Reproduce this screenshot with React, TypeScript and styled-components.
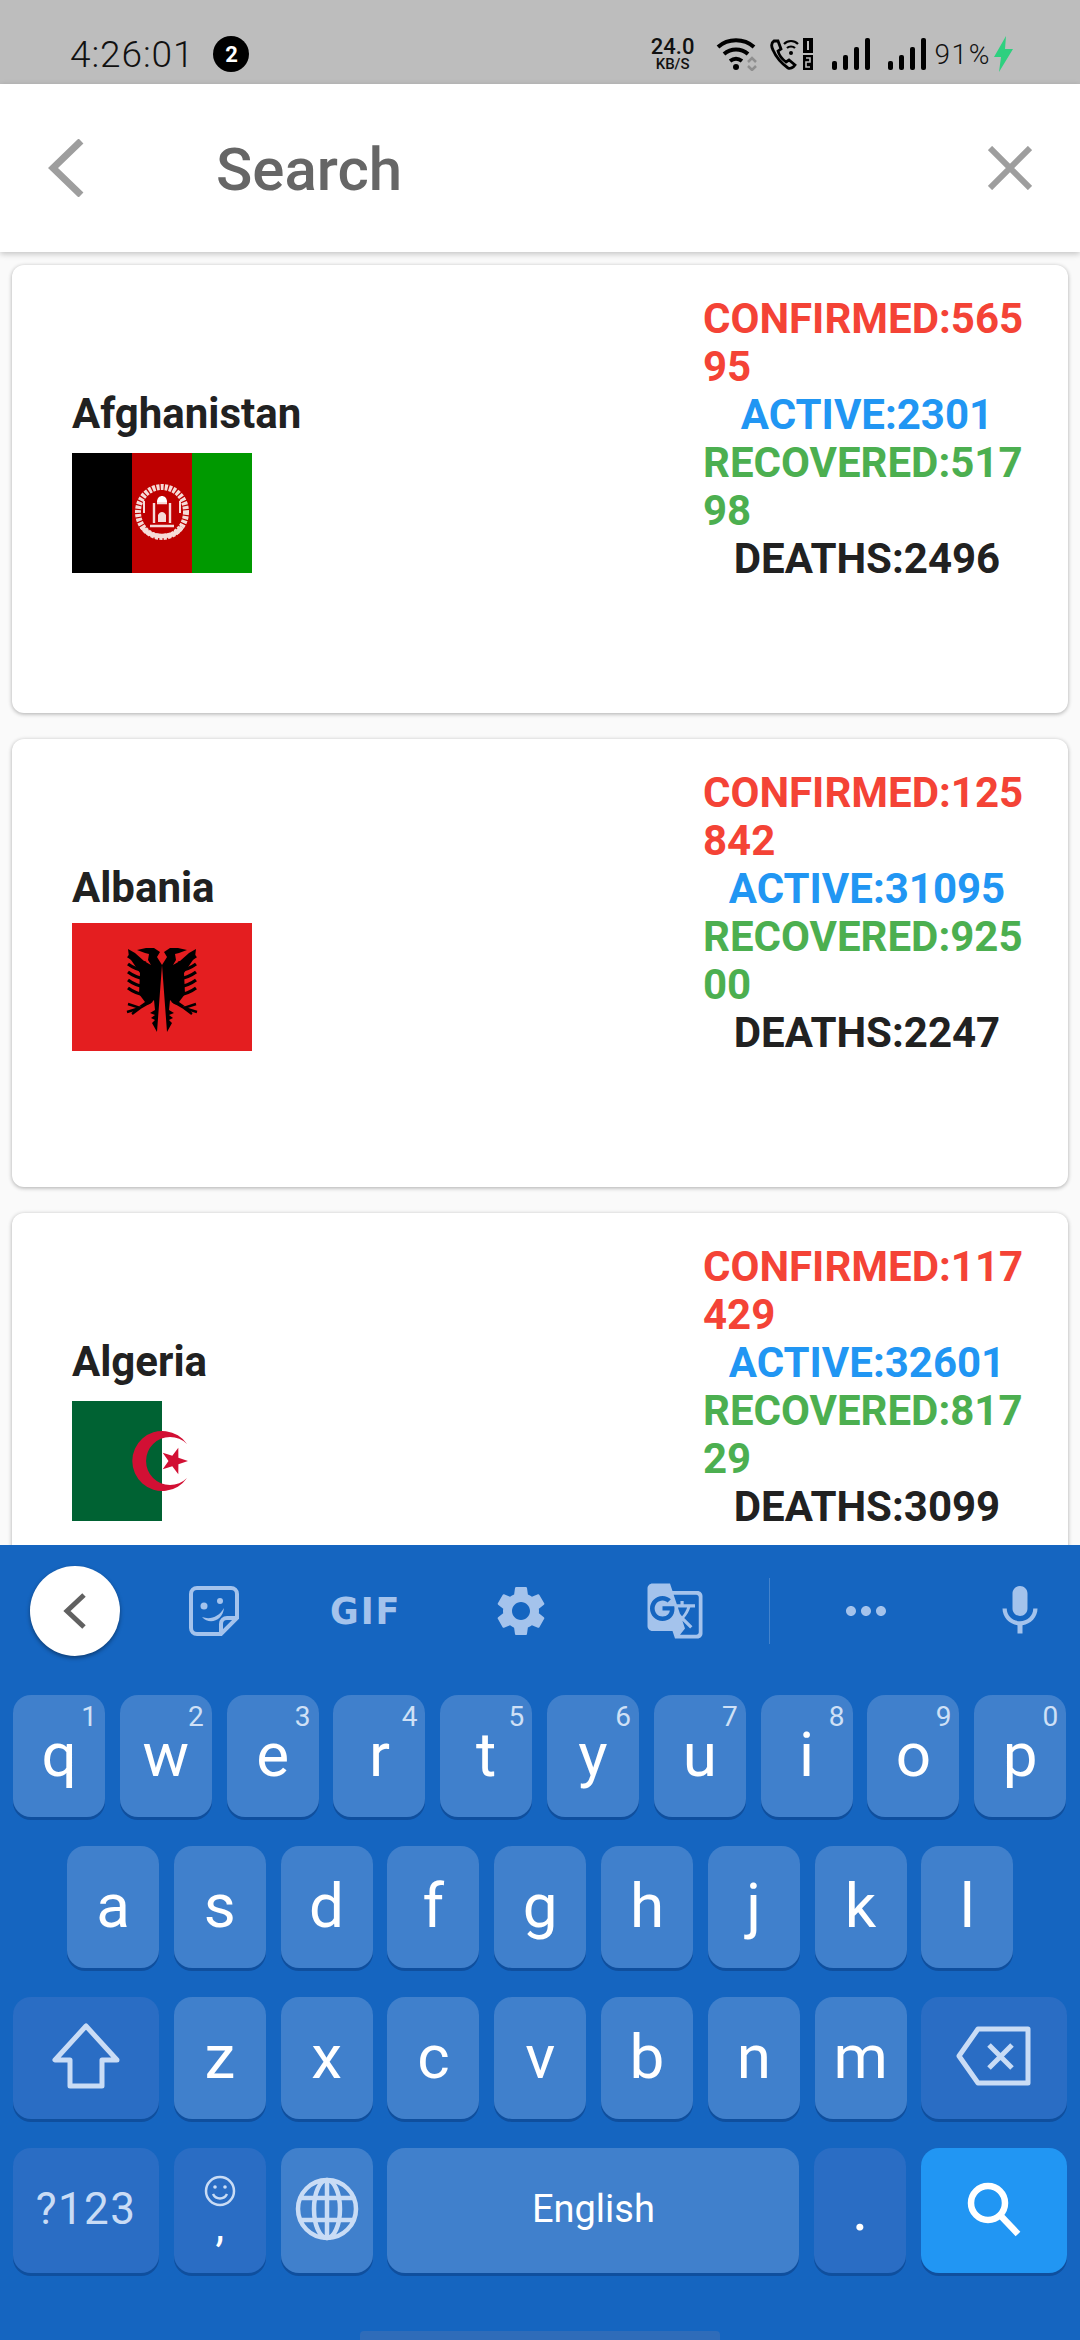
import React from 'react';
import styled, { createGlobalStyle } from 'styled-components';
import { MdGTranslate, MdMic, MdMoreHoriz, MdSettings } from 'react-icons/md';

const GlobalStyle = createGlobalStyle`
  html, body {
    margin: 0;
    padding: 0;
    background: #fafafa;
  }
  * {
    box-sizing: border-box;
  }
`;

const Page = styled.div`
  width: 1080px;
  height: 2340px;
  display: flex;
  flex-direction: column;
  overflow: hidden;
  font-family: Roboto, 'Liberation Sans', sans-serif;
`;

const StatusBar = styled.div`
  height: 84px;
  flex: none;
  background: #bdbdbd;
  display: flex;
  align-items: center;
  padding: 24px 0 0 70px;
  color: #111;
`;

const Clock = styled.span`
  font-size: 37px;
  font-weight: 300;
  letter-spacing: 0.9px;
`;

const NoteBadge = styled.span`
  width: 36px;
  height: 36px;
  margin-left: 19px;
  border-radius: 50%;
  background: #000;
  color: #fff;
  font-size: 22px;
  font-weight: 700;
  display: flex;
  align-items: center;
  justify-content: center;
`;

const StatusRight = styled.div`
  margin-left: auto;
  margin-right: 66px;
  display: flex;
  align-items: center;
`;

const NetSpeed = styled.div`
  display: flex;
  flex-direction: column;
  align-items: center;
  font-weight: 500;
  margin-right: 22px;
`;

const NetValue = styled.span`
  font-size: 22px;
  line-height: 20px;
`;

const NetUnit = styled.span`
  font-size: 15px;
  line-height: 15px;
`;

const Battery = styled.span`
  font-size: 28px;
  font-weight: 300;
  letter-spacing: 1.6px;
  margin-left: 8px;
`;

const Header = styled.header`
  height: 168px;
  flex: none;
  background: #fff;
  box-shadow: 0 2px 6px rgba(0, 0, 0, 0.22);
  display: flex;
  align-items: center;
  padding: 0 48px;
  position: relative;
  z-index: 1;
`;

const SearchLabel = styled.div`
  margin-left: 132px;
  padding-top: 2px;
  font-size: 60px;
  font-weight: 500;
  color: #666;
  flex: 1;
`;

const List = styled.main`
  flex: 1;
  min-height: 0;
  overflow: hidden;
  padding: 13px 12px 0;
  display: flex;
  flex-direction: column;
  gap: 26px;
`;

const Card = styled.article`
  height: 448px;
  flex: none;
  background: #fff;
  border-radius: 12px;
  box-shadow: 0 1px 4px rgba(0, 0, 0, 0.32);
  display: flex;
  justify-content: space-between;
  padding: 30px 37px 0 60px;
`;

const CountryColumn = styled.div`
  padding-top: 95px;
`;

const CountryName = styled.div`
  font-size: 42px;
  font-weight: 700;
  line-height: 48px;
  color: #212121;
`;

const FlagSlot = styled.div`
  height: 120px;
  margin-top: 15px;
  display: flex;
  align-items: center;
`;

const StatColumn = styled.div`
  width: 328px;
  display: flex;
  flex-direction: column;
  align-items: center;
`;

const Stat = styled.div<{ $color: string }>`
  font-size: 42px;
  font-weight: 700;
  line-height: 48px;
  color: ${(p) => p.$color};
  word-break: break-all;
`;

const Keyboard = styled.section`
  height: 795px;
  flex: none;
  background: #1565c0;
  position: relative;
  z-index: 2;
  display: flex;
  flex-direction: column;
`;

const Toolbar = styled.div`
  height: 150px;
  flex: none;
  display: flex;
  align-items: center;
  padding: 0 0 18px 30px;
  color: #a4c3ec;
`;

const CollapseButton = styled.div`
  width: 90px;
  height: 90px;
  flex: none;
  border-radius: 50%;
  background: #fff;
  box-shadow: 0 2px 4px rgba(0, 0, 0, 0.4);
  display: flex;
  align-items: center;
  justify-content: center;
`;

const ToolSlot = styled.div<{ $gap: number }>`
  width: 60px;
  height: 70px;
  flex: none;
  margin-left: ${(p) => p.$gap}px;
  display: flex;
  align-items: center;
  justify-content: center;
`;

const GifMark = styled.span`
  font-size: 38px;
  font-weight: 900;
  letter-spacing: 2px;
  font-family: 'DejaVu Sans', sans-serif;
  transform: scaleX(0.92);
`;

const ToolDivider = styled.div`
  width: 1px;
  height: 66px;
  background: rgba(255, 255, 255, 0.2);
`;

const KeyRows = styled.div`
  display: flex;
  flex-direction: column;
  gap: 29px;
`;

const KeyRow = styled.div<{ $inset?: number }>`
  display: flex;
  gap: 14.8px;
  padding: 0 0 0 ${(p) => p.$inset ?? 13}px;
`;

const Key = styled.div<{ $w?: number; $h?: number; $tone?: 'letter' | 'fn' | 'action' }>`
  width: ${(p) => p.$w ?? 92}px;
  height: ${(p) => p.$h ?? 122}px;
  flex: none;
  position: relative;
  padding-bottom: 4px;
  border-radius: 18px;
  background: ${(p) =>
    p.$tone === 'fn' ? '#2a6dc4' : p.$tone === 'action' ? '#2196f3' : '#4080cc'};
  box-shadow: 0 3px 0 #0f4f9e;
  color: #fff;
  font-size: 62px;
  display: flex;
  align-items: center;
  justify-content: center;
`;

const KeyHint = styled.span`
  position: absolute;
  top: 7px;
  right: 8px;
  font-size: 28px;
  line-height: 30px;
  color: #cfe0f6;
`;

const SpaceLabel = styled.span`
  font-size: 38px;
`;

const SymbolLabel = styled.span`
  font-size: 44px;
  color: #c9dcf5;
  letter-spacing: 1.4px;
`;

const CommaKey = styled.div`
  display: flex;
  flex-direction: column;
  align-items: center;
  color: #fff;
  font-size: 44px;
  line-height: 36px;
`;

const NavPill = styled.div`
  position: absolute;
  left: 360px;
  bottom: 0;
  width: 360px;
  height: 9px;
  border-radius: 4px 4px 0 0;
  background: #2f6cb9;
`;

const Wifi = () => (
  <svg width="42" height="34" viewBox="0 0 42 34" fill="none" stroke="#000" strokeWidth="4">
    <path d="M2 10c10-9 26-9 36 0M8 17c7-6 17-6 24 0M14 24c4-3 8-3 12 0" />
    <circle cx="20" cy="30" r="3" fill="#000" stroke="none" />
    <path d="M32 25l4-4 4 4M32 29l4 4 4-4" stroke="#8f8f8f" strokeWidth="2.5" />
  </svg>
);

const WifiCall = () => (
  <svg width="44" height="34" viewBox="0 0 44 34" fill="none" style={{ marginLeft: 12 }}>
    <path
      d="M4 4c-3 2-3 5-1 9 3 7 8 13 15 18 2 1 5 0 7-3l-6-5-3 2c-4-3-7-7-8-11l3-2-3-8z"
      stroke="#000"
      strokeWidth="2.8"
    />
    <path d="M14 7c4-4 10-4 14 0M17 11c2-2 6-2 8 0" stroke="#000" strokeWidth="2.2" />
    <circle cx="21" cy="16" r="2" fill="#000" />
    <rect x="33" y="1" width="10" height="15" fill="#000" />
    <rect x="33" y="18" width="10" height="15" fill="#000" />
    <path d="M38 4v9" stroke="#bdbdbd" strokeWidth="2" />
    <path d="M36 21h4v4h-4v5h4" stroke="#bdbdbd" strokeWidth="1.6" />
  </svg>
);

const Signal = ({ gap = 12 }: { gap?: number }) => (
  <svg width="38" height="32" viewBox="0 0 38 32" fill="#000" style={{ marginLeft: gap }}>
    <rect x="0" y="23" width="5" height="9" rx="2" />
    <rect x="11" y="17" width="5" height="15" rx="2" />
    <rect x="22" y="9" width="5" height="23" rx="2" />
    <rect x="33" y="0" width="5" height="32" rx="2" />
  </svg>
);

const Bolt = () => (
  <svg width="20" height="36" viewBox="0 0 20 36" style={{ marginLeft: 3 }}>
    <path d="M12 0L0 21h7L5 36 19 13h-8z" fill="#2ed07f" />
  </svg>
);

const BackChevron = () => (
  <svg width="36" height="58" viewBox="0 0 36 58" fill="none" stroke="#9e9e9e" strokeWidth="7">
    <path d="M33 2L5 29l28 27" />
  </svg>
);

const CloseCross = () => (
  <svg width="44" height="44" viewBox="0 0 44 44" stroke="#9e9e9e" strokeWidth="6">
    <path d="M2 2l40 40M42 2L2 42" />
  </svg>
);

const AfghanFlag = () => (
  <svg width="180" height="120" viewBox="0 0 180 120">
    <rect width="60" height="120" fill="#000" />
    <rect x="60" width="60" height="120" fill="#be0000" />
    <rect x="120" width="60" height="120" fill="#009900" />
    <g fill="none" stroke="#f6dcd8">
      <ellipse cx="90" cy="59" rx="24" ry="25" strokeWidth="6" strokeDasharray="3 1.2" />
      <path d="M82 70V50M98 70V50M85 50h10M78 73h24" strokeWidth="2.4" />
      <path d="M70 74c8 12 32 12 40 0" strokeWidth="4.5" />
      <path d="M72 48v12M108 48v12" strokeWidth="2" />
    </g>
    <path d="M85 49c0-8 10-8 10 0z" fill="#fff" />
    <path d="M86 69v-7c2-4 6-4 8 0v7z" fill="#f6dcd8" />
  </svg>
);

const eagleFeathers = [34, 42, 50, 58, 66];

const EagleHalf = () => (
  <g>
    <path
      d="M90 42l5-8-3-5 6-4 8 0 9 2-8 3-4 1 1 6-3 5 7-4 9-8 7-4-1 8-11 16 1 21-6 8 7 5-12-3-4-4-1 10 5 3-5 2 4 3-4 2 3 3-5 9z"
      fill="#000"
    />
    {eagleFeathers.map((y) => (
      <path key={y} d={`M106 ${y + 6}Q116 ${y + 5} 124 ${y - 1}`} stroke="#000" strokeWidth="3.2" fill="none" />
    ))}
    <path d="M100 78l12 7 12-4M112 85l13 4M112 85l8 6" stroke="#000" strokeWidth="2.4" fill="none" />
  </g>
);

const AlbanianFlag = () => (
  <svg width="180" height="128" viewBox="0 0 180 128">
    <rect width="180" height="128" fill="#e41e20" />
    <EagleHalf />
    <g transform="translate(180 0) scale(-1 1)">
      <EagleHalf />
    </g>
  </svg>
);

const AlgerianFlag = () => (
  <svg width="180" height="120" viewBox="0 0 180 120">
    <rect width="90" height="120" fill="#006233" />
    <rect x="90" width="90" height="120" fill="#fff" />
    <path d="M115 43A30 30 0 1 0 115 77A24 24 0 1 1 115 43z" fill="#d21034" />
    <polygon
      points="116,60 106.4,63.2 106.3,73.3 100.3,65.2 90.7,68.2 96.5,60 90.7,51.8 100.3,54.8 106.3,46.7 106.4,56.8"
      fill="#d21034"
    />
  </svg>
);

const StickerIcon = () => (
  <svg width="50" height="50" viewBox="0 0 50 50" fill="none" stroke="#a4c3ec" strokeWidth="4">
    <path d="M8 2h34a6 6 0 0 1 6 6v24L32 48H8a6 6 0 0 1-6-6V8a6 6 0 0 1 6-6z" />
    <path d="M48 32H38a6 6 0 0 0-6 6v10" />
    <circle cx="15" cy="20" r="3.5" fill="#a4c3ec" stroke="none" />
    <circle cx="31" cy="15" r="3" fill="#a4c3ec" stroke="none" />
    <path d="M13 31c8 3 17 0 22-9-1 12-14 18-22 9z" fill="#a4c3ec" stroke="none" />
  </svg>
);

const KeyChevron = () => (
  <svg width="26" height="36" viewBox="0 0 26 36" fill="none" stroke="#616161" strokeWidth="5">
    <path d="M22 2L5 18l17 16" />
  </svg>
);

const ShiftIcon = () => (
  <svg width="68" height="66" viewBox="0 0 68 66" fill="none" stroke="#c9dcf5" strokeWidth="5" strokeLinejoin="round">
    <path d="M34 3L3 37h15v26h32V37h15z" />
  </svg>
);

const DeleteIcon = () => (
  <svg width="76" height="60" viewBox="0 0 76 60" fill="none" stroke="#c9dcf5" strokeWidth="5" strokeLinejoin="round">
    <path d="M22 3h50v54H22L3 30z" />
    <path d="M33 19l23 23M56 19L33 42" />
  </svg>
);

const GlobeIcon = () => (
  <svg width="64" height="64" viewBox="0 0 64 64" fill="none" stroke="#c9dcf5" strokeWidth="4.5">
    <circle cx="32" cy="32" r="29" />
    <ellipse cx="32" cy="32" rx="13" ry="29" />
    <path d="M32 3v58M5 21h54M5 43h54" />
  </svg>
);

const SmileIcon = () => (
  <svg width="32" height="34" viewBox="0 0 32 34" fill="none" stroke="#c9dcf5" strokeWidth="2.5">
    <circle cx="16" cy="17" r="14" />
    <circle cx="11" cy="13" r="1.8" fill="#c9dcf5" stroke="none" />
    <circle cx="21" cy="13" r="1.8" fill="#c9dcf5" stroke="none" />
    <path d="M9 20c3 6 11 6 14 0" />
  </svg>
);

const SearchIcon = () => (
  <svg width="56" height="56" viewBox="0 0 56 56" fill="none" stroke="#fff" strokeWidth="6.5">
    <circle cx="22" cy="22" r="17" />
    <path d="M34 34l18 19" />
  </svg>
);

const countries = [
  { name: 'Afghanistan', flag: <AfghanFlag />, confirmed: 56595, active: 2301, recovered: 51798, deaths: 2496 },
  { name: 'Albania', flag: <AlbanianFlag />, confirmed: 125842, active: 31095, recovered: 92500, deaths: 2247 },
  { name: 'Algeria', flag: <AlgerianFlag />, confirmed: 117429, active: 32601, recovered: 81729, deaths: 3099 },
];

const topRow = [
  ['q', '1'], ['w', '2'], ['e', '3'], ['r', '4'], ['t', '5'],
  ['y', '6'], ['u', '7'], ['i', '8'], ['o', '9'], ['p', '0'],
];

function App() {
  return (
    <Page>
      <GlobalStyle />
      <StatusBar>
        <Clock>4:26:01</Clock>
        <NoteBadge>2</NoteBadge>
        <StatusRight>
          <NetSpeed>
            <NetValue>24.0</NetValue>
            <NetUnit>KB/S</NetUnit>
          </NetSpeed>
          <Wifi />
          <WifiCall />
          <Signal gap={18} />
          <Signal gap={18} />
          <Battery>91%</Battery>
          <Bolt />
        </StatusRight>
      </StatusBar>

      <Header>
        <BackChevron />
        <SearchLabel>Search</SearchLabel>
        <CloseCross />
      </Header>

      <List>
        {countries.map((c) => (
          <Card key={c.name}>
            <CountryColumn>
              <CountryName>{c.name}</CountryName>
              <FlagSlot>{c.flag}</FlagSlot>
            </CountryColumn>
            <StatColumn>
              <Stat $color="#f44336">{`CONFIRMED:${c.confirmed}`}</Stat>
              <Stat $color="#2196f3">{`ACTIVE:${c.active}`}</Stat>
              <Stat $color="#4caf50">{`RECOVERED:${c.recovered}`}</Stat>
              <Stat $color="#212121">{`DEATHS:${c.deaths}`}</Stat>
            </StatColumn>
          </Card>
        ))}
      </List>

      <Keyboard>
        <Toolbar>
          <CollapseButton>
            <KeyChevron />
          </CollapseButton>
          <ToolSlot $gap={64}>
            <StickerIcon />
          </ToolSlot>
          <ToolSlot $gap={92}>
            <GifMark>GIF</GifMark>
          </ToolSlot>
          <ToolSlot $gap={95}>
            <MdSettings size={62} />
          </ToolSlot>
          <ToolSlot $gap={94}>
            <MdGTranslate size={62} />
          </ToolSlot>
          <ToolSlot $gap={34}>
            <ToolDivider />
          </ToolSlot>
          <ToolSlot $gap={37}>
            <MdMoreHoriz size={80} />
          </ToolSlot>
          <ToolSlot $gap={94}>
            <MdMic size={84} />
          </ToolSlot>
        </Toolbar>

        <KeyRows>
          <KeyRow>
            {topRow.map(([letter, hint]) => (
              <Key key={letter}>
                {letter}
                <KeyHint>{hint}</KeyHint>
              </Key>
            ))}
          </KeyRow>
          <KeyRow $inset={67}>
            {'asdfghjkl'.split('').map((letter) => (
              <Key key={letter}>{letter}</Key>
            ))}
          </KeyRow>
          <KeyRow>
            <Key $w={146} $tone="fn">
              <ShiftIcon />
            </Key>
            {'zxcvbnm'.split('').map((letter) => (
              <Key key={letter}>{letter}</Key>
            ))}
            <Key $w={146} $tone="fn">
              <DeleteIcon />
            </Key>
          </KeyRow>
          <KeyRow>
            <Key $w={146} $h={125} $tone="fn">
              <SymbolLabel>?123</SymbolLabel>
            </Key>
            <Key $h={125} $tone="fn">
              <CommaKey>
                <SmileIcon />
                ,
              </CommaKey>
            </Key>
            <Key $h={125}>
              <GlobeIcon />
            </Key>
            <Key $w={412} $h={125}>
              <SpaceLabel>English</SpaceLabel>
            </Key>
            <Key $h={125} $tone="fn">.</Key>
            <Key $w={146} $h={125} $tone="action">
              <SearchIcon />
            </Key>
          </KeyRow>
        </KeyRows>
        <NavPill />
      </Keyboard>
    </Page>
  );
}

export default App;
